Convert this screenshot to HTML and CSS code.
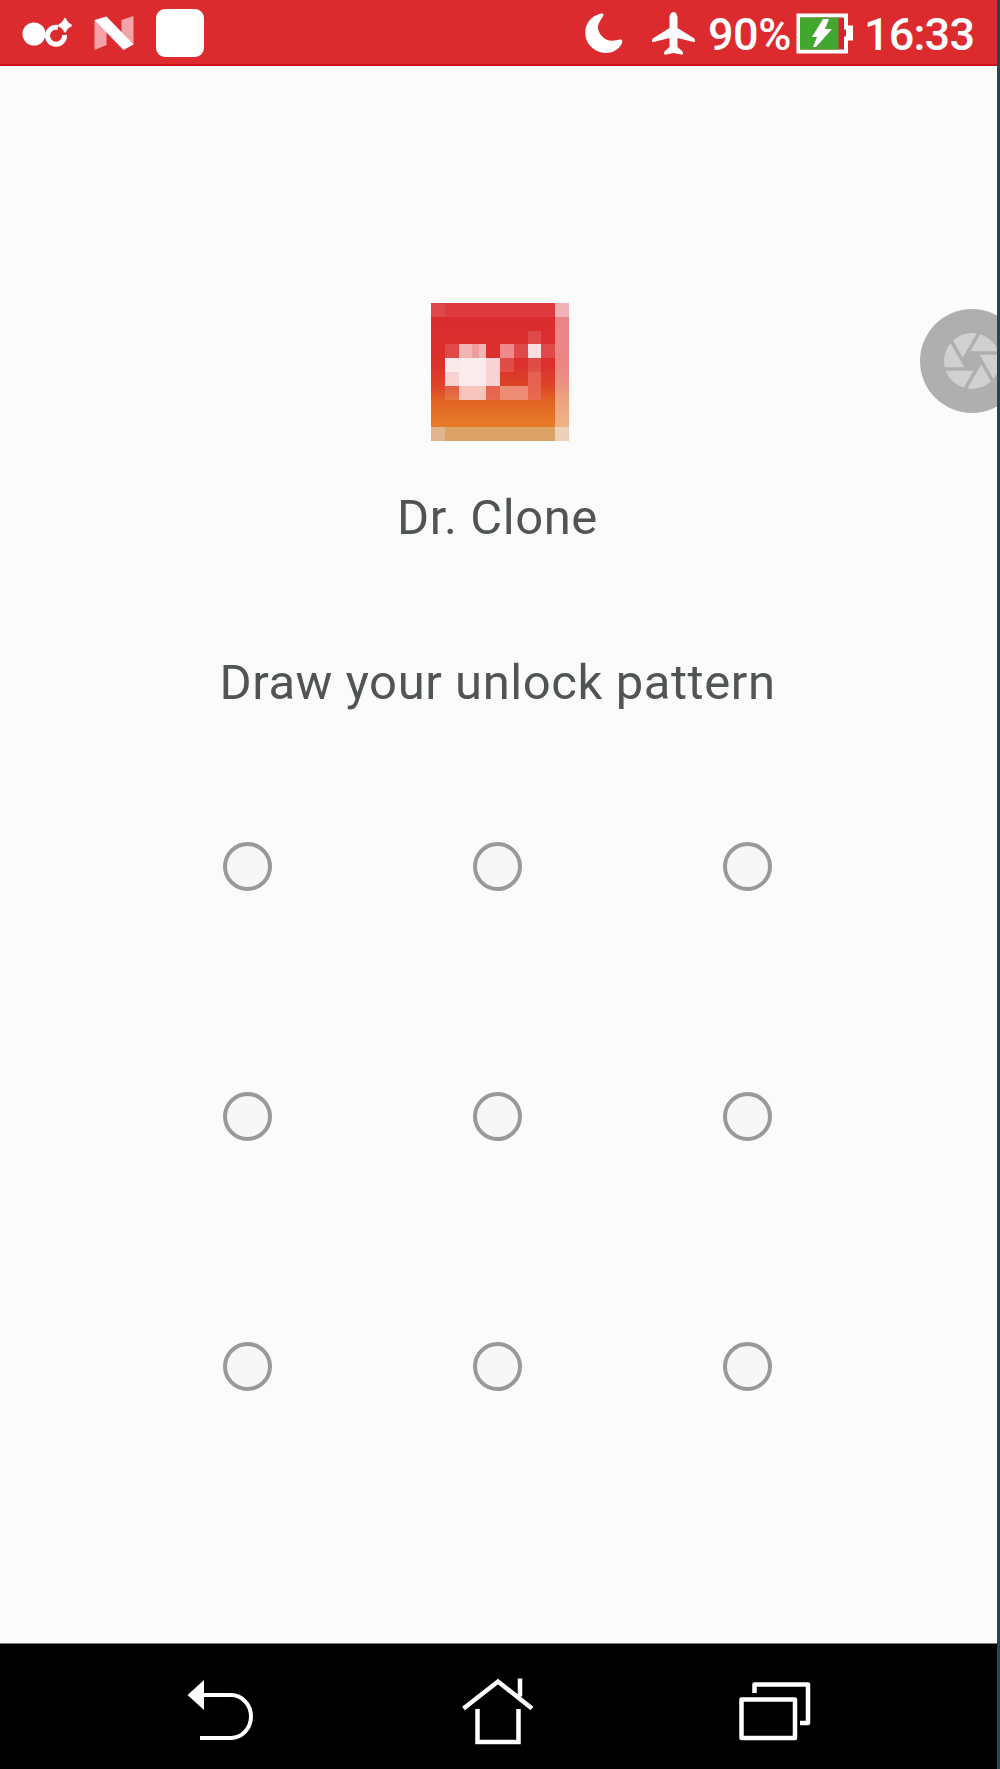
FILE: index.html
```html
<!DOCTYPE html>
<html lang="en">
<head>
<meta charset="utf-8">
<title>Dr. Clone</title>
<link rel="stylesheet" href="styles.css">
</head>
<body>
<div class="screen">
  <header class="status">
    <div class="notices">
      <svg class="clone-icon" width="50" height="32" viewBox="22 17 50 32"><circle cx="34" cy="34" r="11.500" fill="#fff"/><path d="M58 27.500A8.500 8.500 0 1 0 64.500 35" fill="none" stroke="#fff" stroke-width="5"/><path d="M65 18q2 5 7 7.500q-5 2-7 7q-2-5-7-7q5-2.500 7-7.500z" fill="#fff" stroke="#fff"/></svg>
      <svg class="n-icon" width="40" height="34" viewBox="94 16 40 34"><path d="M94.500 20l12 10v15l-12 5zM121.500 20l12-4v29l-12-8z" fill="#f5a3a8"/><path d="M94.500 20l12-3.500 27 28-10 5.500z" fill="#fff"/></svg>
      <span class="app-tile"></span>
    </div>
    <div class="indicators">
      <svg class="moon" width="39" height="41" viewBox="585 13 39 41"><path d="M601 13.500C586 17 581 33 589 44.500C600 58 619 54 622.500 41.500C622 39 620 39 617 40C607 43 599 36 598 28C597.500 22 604 17 603.500 14.500Q603 13 601 13.500z" fill="#fff"/></svg>
      <svg class="plane" width="44" height="43" viewBox="652 12 44 43"><path d="M673.500 12c2.500 0 4 3 4 6v10l16 10c2 1.500 2 4.500 0 4l-16-4v9l4.500 4c2 2 1 4-1 3.500l-7.500-1.500-7.500 1.500c-2 .5-3-1.500-1-3.500l4.500-4v-9l-16 4c-2 .5-2-2.500 0-4l16-10v-10c0-3 1.500-6 4-6z" fill="#fff"/></svg>
      <span class="percent">90%</span>
      <svg class="battery" width="57" height="41" viewBox="796 13 57 41"><path d="M798.500 15.500h47.500v12h5v11h-5v13h-47.500z" fill="#d9202d" stroke="#fff" stroke-width="4"/><path d="M846 28h6v10h-6z" fill="#fff"/><path d="M800 17.500h38.500v32h-38.500z" fill="#42a72f"/><path d="M823 19h6l-4 10h7l-16 18h-3l4-10h-5z" fill="#fff"/></svg>
      <span class="clock">16:33</span>
    </div>
  </header>
  <main class="lock">
    <svg class="logo" width="138" height="138" viewBox="0 0 10 10" preserveAspectRatio="none" shape-rendering="crispEdges">
      <defs><linearGradient id="base" x1="0" y1="0" x2="0" y2="1"><stop offset="0" stop-color="#d92b31"/><stop offset=".45" stop-color="#dc302c"/><stop offset=".6" stop-color="#dc4528"/><stop offset=".7" stop-color="#e26124"/><stop offset=".88" stop-color="#e67a29"/><stop offset="1" stop-color="#e67a29"/></linearGradient></defs>
      <path fill="url(#base)" d="M0 0h10v10H0z"/>
      <path fill="#dc3a3c" d="M1 0h8v1H1z"/>
      <path fill="#fff" fill-opacity=".2" d="M0 0h1v1H0zM7 2h1v1H7zM1 3h1v1H1zM6 3h1v1H6zM8 3h1v1H8zM1 6h1v1H1zM5 4h1v1H5zM7 4h1v1H7z" opacity=".65"/>
      <path fill="#dba365" d="M0 9h10v1H0z"/><path fill="#dfb590" d="M0 9h1v1H0z"/>
      <path fill="#fff" fill-opacity=".42" d="M9 1h1v8H9z"/><path fill="#f0b2b6" d="M9 0h1v1H9z"/><path fill="#ecd2b8" d="M9 9h1v1H9z"/>
      <path fill="#f3b4b5" d="M2 3h1v1H2zM3.500 3h.5v1h-.5z"/><path fill="#ef9ea0" d="M3 3h.5v1H3z"/>
      <path fill="#ee898c" d="M5 3h1v1H5z"/><path fill="#fce0e1" d="M7 3h1v1H7z"/>
      <path fill="#fbe8e9" d="M1 4h4v2H1z"/><path fill="#fcebec" d="M2 4h2v2H2z"/><path fill="#f9d2d4" d="M1 5h1v1H1zM4 4h1v2H4z"/>
      <path fill="#f7c4bd" d="M2 6h2v1H2z"/><path fill="#ed8d75" d="M5 6h2v1H5z"/><path fill="#e96d5d" d="M7 5h1v2H7zM4 6h1v1H4z" fill-opacity=".75"/>
    </svg>
    <h1 class="name">Dr. Clone</h1>
    <p class="prompt">Draw your unlock pattern</p>
    <div class="pattern">
      <i class="dot"></i><i class="dot"></i><i class="dot"></i>
      <i class="dot"></i><i class="dot"></i><i class="dot"></i>
      <i class="dot"></i><i class="dot"></i><i class="dot"></i>
    </div>
    <svg class="shutter" width="77" height="106" viewBox="920 308 77 106"><circle cx="972" cy="361" r="52" fill="#afafaf"/><circle cx="972" cy="361" r="28" fill="#d0d0d0"/><g fill="none" stroke="#afafaf" stroke-width="3.500"><path d="M967 353h34"/><path d="M967 353h34" transform="rotate(60 972 361)"/><path d="M967 353h34" transform="rotate(120 972 361)"/><path d="M967 353h34" transform="rotate(180 972 361)"/><path d="M967 353h34" transform="rotate(240 972 361)"/><path d="M967 353h34" transform="rotate(300 972 361)"/></g><circle cx="972" cy="361" r="8" fill="#afafaf"/></svg>
  </main>
  <nav class="nav">
    <svg class="back" width="66" height="62" viewBox="187 1680 66 62"><path d="M187.500 1695L204 1680v30z" fill="#fff"/><path d="M203 1695h28a20 21.500 0 0 1 0 43h-31" fill="none" stroke="#fff" stroke-width="4"/></svg>
    <svg class="home" width="72" height="68" viewBox="462 1677 72 68"><path d="M463.500 1707.500L498 1680.500 532 1707.500M520 1677.500v18M477.500 1708v33h41v-33" fill="none" stroke="#fff" stroke-width="4.500"/></svg>
    <svg class="recent" width="73" height="60" viewBox="738 1680 73 60"><path d="M741.500 1698.500h53.500v38.500h-53.500zM754.500 1692v-8.500h53.500v38.500h-8" fill="none" stroke="#fff" stroke-width="4.500" stroke-linejoin="round"/></svg>
  </nav>
</div>
</body>
</html>
```
FILE: styles.css
```css
* { box-sizing: border-box; }
body { margin: 0; background: #26454c; font-family: Roboto, "Liberation Sans", sans-serif; }
svg { display: block; flex: none; }
.screen { width: 997px; height: 1769px; display: flex; flex-direction: column; background: #fbfbfb; }
.status { height: 66px; flex: none; display: flex; justify-content: space-between; background: #dc2b2f; border-bottom: 2px solid #d0101d; color: #fff; font-weight: 500; font-size: 45px; line-height: 66px; }
.notices { display: flex; align-items: flex-start; padding-left: 22px; }
.clone-icon { margin-top: 17px; }
.n-icon { margin: 16px 0 0 22px; }
.app-tile { width: 48px; height: 48px; margin: 9px 0 0 22px; background: #fff; border-radius: 9px; }
.indicators { display: flex; align-items: flex-start; }
.moon { margin-top: 13px; }
.plane { margin: 12px 0 0 28px; }
.percent { width: 83px; margin-left: 12px; margin-top: 2px; letter-spacing: -0.5px; }
.battery { margin: 13px 0 0 5px; }
.clock { width: 133px; margin-left: 11px; margin-top: 2px; letter-spacing: -0.8px; }
.lock { flex: 1; position: relative; display: flex; flex-direction: column; align-items: center; padding-top: 237px; color: #505554; }
.logo { margin-left: 3px; }
.name, .prompt { margin: 0; font-size: 49px; font-weight: 400; line-height: 60px; white-space: nowrap; letter-spacing: 0.57px; padding-right: 2px; }
.name { margin-top: 47px; }
.prompt { margin-top: 105px; }
.pattern { margin-top: 129px; padding-right: 2px; display: grid; grid-template-columns: repeat(3, 49px); gap: 201px; }
.dot { width: 49px; height: 49px; border: 4px solid #999; border-radius: 50%; background: #f7f7f7; }
.shutter { position: absolute; right: 0; top: 242px; }
.nav { height: 126px; flex: none; display: flex; align-items: flex-start; background: #000; border-top: 1px solid #777; padding-left: 187px; }
.back { margin-top: 36px; }
.home { margin: 34px 0 0 209px; }
.recent { margin: 37px 0 0 204px; }
```
